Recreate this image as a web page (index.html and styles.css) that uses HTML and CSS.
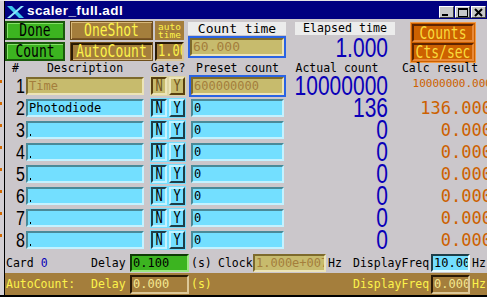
FILE: index.html
```html
<!DOCTYPE html>
<html lang="en">
<head>
    <meta charset="UTF-8">
    <meta name="viewport" content="width=device-width, initial-scale=1.0">
    <title>scaler_full.adl</title>
    <link rel="stylesheet" href="styles.css">
</head>
<body>
    <div class="window">
        <div class="edge"></div>
        <div class="main">
            <div class="titlebar">
                <svg class="xlogo" width="17" height="12" viewBox="0 0 17 12">
                    <polygon points="0,0 5,0 17,12 12,12" fill="#3cc8ec"/>
                    <polygon points="14,0 17,0 3,12 0,12" fill="#8ee6ff"/>
                </svg>
                <span class="title">scaler_full.adl</span>
                <div class="wm">
                    <span class="wm-btn"><span class="g-min"></span></span>
                    <span class="wm-btn"><span class="g-max"></span></span>
                    <span class="wm-btn">
                        <svg width="9" height="9" viewBox="0 0 9 9"><path d="M1 1L8 8M8 1L1 8" stroke="#000" stroke-width="2"/></svg>
                    </span>
                </div>
            </div>

            <div class="top">
                <div class="col col-run">
                    <div class="btn btn-green"><span class="tall">Done</span></div>
                    <div class="btn btn-green"><span class="tall">Count</span></div>
                </div>
                <div class="col col-shot">
                    <div class="btn btn-brown"><span class="tall">OneShot</span></div>
                    <div class="btn btn-brown down"><span class="tall">AutoCount</span></div>
                </div>
                <div class="col col-auto">
                    <div class="auto-label">auto<br>time</div>
                    <div class="field brown-entry"><span class="tall">1.00</span></div>
                </div>
                <div class="col col-count">
                    <div class="label-light big-label">Count time</div>
                    <div class="outline">
                        <div class="field beige tall-field">60.000</div>
                    </div>
                </div>
                <div class="col col-elapsed">
                    <div class="label-light">Elapsed time</div>
                    <div class="big"><span class="tall">1.000</span></div>
                </div>
                <div class="col col-mode">
                    <div class="mode">
                        <div class="btn btn-orange"><span class="tall">Counts</span></div>
                        <div class="btn btn-orange"><span class="tall">Cts/sec</span></div>
                    </div>
                </div>
            </div>

            <div class="thead">
                <div class="h-num">#</div>
                <div class="h-desc">Description</div>
                <div class="h-gate">Gate?</div>
                <div class="h-preset">Preset count</div>
                <div class="h-actual">Actual count</div>
                <div class="h-calc">Calc result</div>
            </div>

            <div class="row">
                <div class="num"><span class="tall">1</span></div>
                <div class="desc field beige">Time</div>
                <div class="gate gate-beige">
                    <div class="gb on"><span class="tall">N</span></div>
                    <div class="gb off"><span class="tall">Y</span></div>
                </div>
                <div class="preset focus"><div class="field beige">600000000</div></div>
                <div class="actual"><span class="tall">10000000</span></div>
                <div class="calc small">10000000.000</div>
            </div>
            <div class="row">
                <div class="num"><span class="tall">2</span></div>
                <div class="desc field cyan">Photodiode</div>
                <div class="gate">
                    <div class="gb on"><span class="tall">N</span></div>
                    <div class="gb off"><span class="tall">Y</span></div>
                </div>
                <div class="preset"><div class="field cyan">0</div></div>
                <div class="actual"><span class="tall">136</span></div>
                <div class="calc">136.000</div>
            </div>
            <div class="row">
                <div class="num"><span class="tall">3</span></div>
                <div class="desc field cyan empty"></div>
                <div class="gate">
                    <div class="gb on"><span class="tall">N</span></div>
                    <div class="gb off"><span class="tall">Y</span></div>
                </div>
                <div class="preset"><div class="field cyan">0</div></div>
                <div class="actual"><span class="tall">0</span></div>
                <div class="calc">0.000</div>
            </div>
            <div class="row">
                <div class="num"><span class="tall">4</span></div>
                <div class="desc field cyan empty"></div>
                <div class="gate">
                    <div class="gb on"><span class="tall">N</span></div>
                    <div class="gb off"><span class="tall">Y</span></div>
                </div>
                <div class="preset"><div class="field cyan">0</div></div>
                <div class="actual"><span class="tall">0</span></div>
                <div class="calc">0.000</div>
            </div>
            <div class="row">
                <div class="num"><span class="tall">5</span></div>
                <div class="desc field cyan empty"></div>
                <div class="gate">
                    <div class="gb on"><span class="tall">N</span></div>
                    <div class="gb off"><span class="tall">Y</span></div>
                </div>
                <div class="preset"><div class="field cyan">0</div></div>
                <div class="actual"><span class="tall">0</span></div>
                <div class="calc">0.000</div>
            </div>
            <div class="row">
                <div class="num"><span class="tall">6</span></div>
                <div class="desc field cyan empty"></div>
                <div class="gate">
                    <div class="gb on"><span class="tall">N</span></div>
                    <div class="gb off"><span class="tall">Y</span></div>
                </div>
                <div class="preset"><div class="field cyan">0</div></div>
                <div class="actual"><span class="tall">0</span></div>
                <div class="calc">0.000</div>
            </div>
            <div class="row">
                <div class="num"><span class="tall">7</span></div>
                <div class="desc field cyan empty"></div>
                <div class="gate">
                    <div class="gb on"><span class="tall">N</span></div>
                    <div class="gb off"><span class="tall">Y</span></div>
                </div>
                <div class="preset"><div class="field cyan">0</div></div>
                <div class="actual"><span class="tall">0</span></div>
                <div class="calc">0.000</div>
            </div>
            <div class="row">
                <div class="num"><span class="tall">8</span></div>
                <div class="desc field cyan empty"></div>
                <div class="gate">
                    <div class="gb on"><span class="tall">N</span></div>
                    <div class="gb off"><span class="tall">Y</span></div>
                </div>
                <div class="preset"><div class="field cyan">0</div></div>
                <div class="actual"><span class="tall">0</span></div>
                <div class="calc">0.000</div>
            </div>

            <div class="status status-gray">
                <div class="s-lead">Card <span class="blue">0</span></div>
                <div class="s-lbl">Delay</div>
                <div class="s-field field green">0.100</div>
                <div class="s-unit">(s)</div>
                <div class="s-clock">Clock</div>
                <div class="s-field-wide field beige">1.000e+007</div>
                <div class="s-hz">Hz</div>
                <div class="s-df">DisplayFreq</div>
                <div class="s-field-sm field cyan dark">10.00</div>
                <div class="s-hz2">Hz</div>
            </div>
            <div class="status status-brown">
                <div class="s-lead">AutoCount:</div>
                <div class="s-lbl">Delay</div>
                <div class="s-field field brown-entry">0.000</div>
                <div class="s-unit">(s)</div>
                <div class="s-gap"></div>
                <div class="s-df">DisplayFreq</div>
                <div class="s-field-sm field brown-entry">0.000</div>
                <div class="s-hz2">Hz</div>
            </div>
        </div>
    </div>
</body>
</html>
```

FILE: styles.css
```css
* {
    box-sizing: border-box;
}
body {
    margin: 0;
    background: #cbc7cb;
    font-family: "DejaVu Sans Mono", monospace;
}
.window {
    width: 487px;
    height: 297px;
    display: flex;
    overflow: hidden;
    border-top: 1px solid #e6e6e6;
    border-bottom: 2px solid #000;
    background: #cbc7cb;
}
.edge {
    width: 4px;
    flex-shrink: 0;
    background-color: #d4d0d4;
    background-image: repeating-linear-gradient(#d46a00 0 3px, transparent 3px 22px);
    background-size: 2px 176px;
    background-position: 0 79px;
    background-repeat: no-repeat;
}
.main {
    flex: 1;
    min-width: 0;
    border-left: 1px solid #000;
    display: flex;
    flex-direction: column;
    overflow: hidden;
}
.tall {
    display: inline-block;
    transform: scaleY(1.32);
}

/* title bar */
.titlebar {
    height: 18px;
    flex-shrink: 0;
    background: #000080;
    display: flex;
    align-items: flex-end;
    padding: 0 1px 1px 1px;
}
.xlogo {
    margin-left: 1px;
}
.title {
    margin-left: 3px;
    margin-bottom: 1px;
    font-family: "Liberation Sans", sans-serif;
    font-weight: bold;
    font-size: 13.5px;
    letter-spacing: 0.4px;
    line-height: 12px;
    color: #fff;
}
.wm {
    margin-left: auto;
    display: flex;
    gap: 1px;
}
.wm-btn {
    width: 15px;
    height: 12px;
    background: #c8c8c8;
    border: 1px solid;
    border-color: #fff #404040 #404040 #fff;
    display: flex;
    align-items: center;
    justify-content: center;
}
.g-min {
    width: 6px;
    height: 2px;
    background: #000;
    margin-top: 6px;
    margin-right: 3px;
}
.g-max {
    width: 10px;
    height: 9px;
    border: 1px solid #000;
    border-top-width: 2px;
}

/* top controls */
.top {
    display: flex;
    height: 43px;
    flex-shrink: 0;
    padding-top: 2px;
}
.col {
    display: flex;
    flex-direction: column;
    gap: 2px;
    flex-shrink: 0;
}
.col-run { width: 60px; }
.col-shot { width: 83px; margin-left: 5px; }
.col-auto { width: 29px; margin-left: 2px; }
.col-count { width: 98px; margin-left: 4px; gap: 1px; padding-top: 1px; }
.col-elapsed { width: 100px; margin-left: 9px; gap: 0; padding-top: 1px; }
.col-mode { width: 66px; margin-left: 15px; padding-top: 1px; }

.btn {
    height: 19px;
    display: flex;
    align-items: center;
    justify-content: center;
    font-size: 13px;
    white-space: nowrap;
}
.btn-green {
    background: #3cb420;
    color: #000;
    border: 2px solid #1a5a0c;
    box-shadow: inset 1px 1px 0 #86e06a;
}
.btn-brown {
    background: #a47e3c;
    color: #fcf34a;
    border: 1px solid #6e4e1c;
    box-shadow: inset 1px 1px 0 #d8b878, inset -1px -1px 0 #7d5627;
}
.btn-brown.down {
    box-shadow: inset 2px 2px 0 #2a1a04, inset -1px -1px 0 #d8b878;
}
.auto-label {
    height: 19px;
    background: #a47e3c;
    color: #fcf34a;
    font-size: 9.5px;
    line-height: 8px;
    text-align: center;
    padding-top: 2px;
}
.label-light {
    height: 13px;
    background: #ececec;
    text-align: center;
    font-size: 11.6px;
    line-height: 13px;
}
.big-label {
    font-size: 13px;
}
.outline {
    height: 22px;
    border: 2px solid #2a63e4;
}
.big {
    text-align: right;
    padding-right: 7px;
    font-family: "Liberation Sans", sans-serif;
    font-size: 21px;
    line-height: 26px;
    color: #0a00b8;
}
.mode {
    height: 41px;
    background: #cd6100;
    border: 1px solid #f29a44;
    padding: 1px;
    display: flex;
    flex-direction: column;
    gap: 1px;
}
.btn-orange {
    height: 18px;
    background: #cd6100;
    color: #f9da3c;
    border: 2px solid;
    border-color: #5e2400 #e88a3a #e88a3a #5e2400;
}

/* fields */
.field {
    height: 18px;
    border: 2px solid;
    font-size: 12px;
    line-height: 14px;
    padding-left: 1px;
    white-space: nowrap;
    overflow: hidden;
}
.cyan {
    background: #73dfff;
    color: #000;
    border-color: #4a8a98 #c4f2ff #c4f2ff #4a8a98;
}
.cyan.dark {
    border-color: #1e3e48 #e8fbff #e8fbff #1e3e48;
}
.beige {
    background: #c7bb6d;
    color: #a47e3c;
    border-color: #7d6a2c #ece4b8 #ece4b8 #7d6a2c;
}
.outline .beige {
    height: 18px;
    font-size: 13px;
}
.green {
    background: #3cb420;
    color: #000;
    border-color: #0e3a06 #9ae880 #9ae880 #0e3a06;
}
.brown-entry {
    height: 19px;
    background: #a47e3c;
    color: #f4e890;
    border-color: #2a1a04 #dcc898 #dcc898 #2a1a04;
}
.col-auto .brown-entry {
    color: #fcf34a;
    font-size: 12px;
}
.empty::after {
    content: "";
    display: block;
    width: 1px;
    height: 2px;
    background: #000;
    margin: 11px 0 0 1px;
}

/* table */
.thead {
    height: 13px;
    flex-shrink: 0;
    display: flex;
    font-size: 11.5px;
    line-height: 13px;
    text-align: center;
}
.thead > div,
.row > div {
    flex-shrink: 0;
}
.h-num { width: 21px; }
.h-desc { width: 118px; margin-right: 6px; }
.h-gate { width: 36px; margin-right: 3px; }
.h-preset { width: 97px; }
.h-actual { width: 102px; }
.h-calc { width: 104px; }

.row {
    height: 22px;
    flex-shrink: 0;
    display: flex;
    align-items: center;
}
.num {
    width: 21px;
    text-align: right;
    padding-right: 1px;
    font-family: "Liberation Sans", sans-serif;
    font-size: 16px;
    line-height: 18px;
}
.desc {
    width: 118px;
    margin-right: 6px;
}
.gate {
    width: 36px;
    height: 20px;
    margin-right: 3px;
    padding: 1px;
    display: flex;
    gap: 2px;
    background: #73dfff;
}
.gb {
    width: 16px;
    height: 18px;
    border: 2px solid;
    display: flex;
    align-items: center;
    justify-content: center;
    font-size: 12px;
}
.gb.on { border-color: #1e3e48 #c4f2ff #c4f2ff #1e3e48; }
.gb.off { border-color: #c4f2ff #1e3e48 #1e3e48 #c4f2ff; }
.gate-beige {
    background: #ddd5a2;
}
.gate-beige .gb {
    background: #c7bb6d;
    color: #6e5420;
}
.gate-beige .gb.on { border-color: #58400f #ece4b8 #ece4b8 #58400f; }
.gate-beige .gb.off { border-color: #ece4b8 #58400f #58400f #ece4b8; }
.preset {
    width: 97px;
    height: 22px;
    padding: 2px;
}
.preset.focus {
    border: 2px solid #2a63e4;
    padding: 0;
}
.actual {
    width: 102px;
    text-align: right;
    font-family: "Liberation Sans", sans-serif;
    font-size: 21px;
    line-height: 22px;
    color: #0a00b8;
}
.calc {
    width: 104px;
    text-align: right;
    font-size: 17px;
    line-height: 22px;
    color: #cd6100;
}
.calc.small {
    font-size: 11px;
    line-height: 14px;
    align-self: flex-start;
    padding-top: 2px;
}

/* status rows */
.status {
    display: flex;
    align-items: center;
    flex-shrink: 0;
    font-size: 11.5px;
    white-space: nowrap;
}
.status > div {
    flex-shrink: 0;
}
.status-gray {
    height: 20px;
    margin-top: 2px;
}
.status-brown {
    height: 22px;
    background: #a47e3c;
    color: #fcf34a;
}
.blue { color: #0a00b8; }
.s-lead { width: 86px; padding-left: 1px; }
.s-lbl { width: 39px; }
.s-field { width: 59px; }
.s-unit { width: 29px; padding-left: 2px; }
.s-clock { width: 35px; }
.s-field-wide { width: 73px; }
.s-hz { width: 27px; padding-left: 2px; }
.s-gap { width: 135px; }
.s-df { width: 78px; }
.s-field-sm { width: 39px; }
.s-hz2 { padding-left: 2px; }
```
